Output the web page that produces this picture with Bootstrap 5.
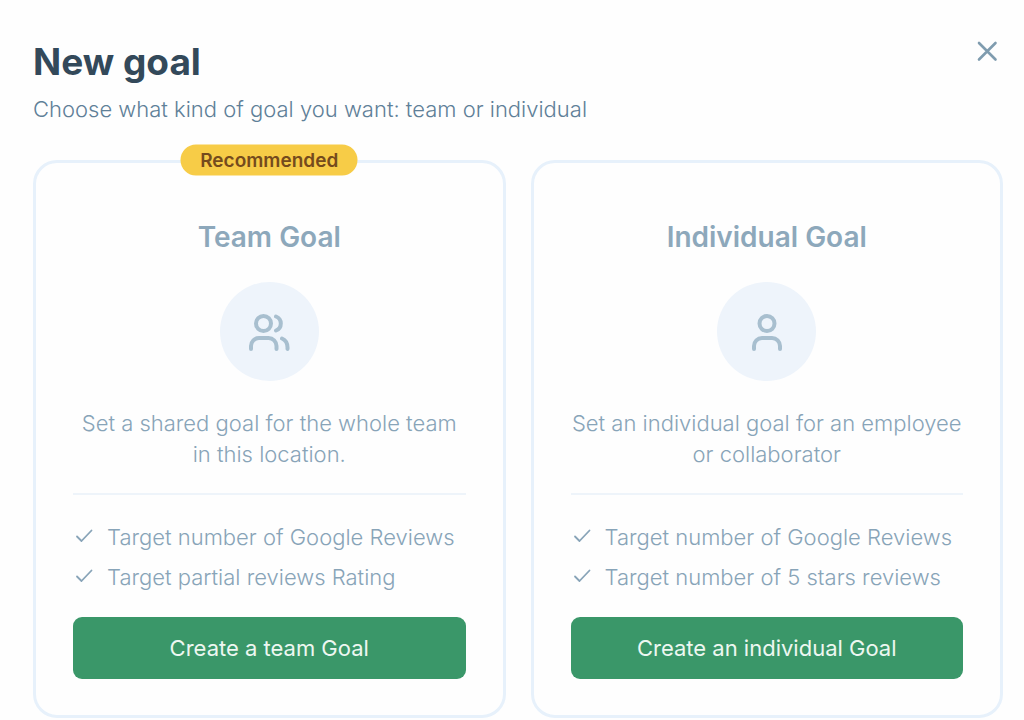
<!DOCTYPE html>
<html lang="en">
<head>
<meta charset="utf-8">
<meta name="viewport" content="width=device-width, initial-scale=1">
<title>New goal</title>
<link href="https://cdn.jsdelivr.net/npm/bootstrap@5.3.0/dist/css/bootstrap.min.css" rel="stylesheet">
<style>
  body { font-family: Inter, "Open Sans", sans-serif; font-size: 22px; font-weight: 300; background: #fefefe; color: #88a4b8; }
  .goal-dialog { padding: 38px 21px 0 33px; }
  .dialog-title { font-size: 37px; line-height: 48px; font-weight: 700; color: #33495a; }
  .dialog-hint { line-height: 32px; margin: 7px 0 35px; color: #5f8098; }
  .close-btn { color: #7f9caf; margin-right: 4px; line-height: 0; }
  .goal-options { --bs-gutter-x: 25px; --bs-gutter-y: 25px; }
  .goal-card { border: 3px solid #e7f1fb; border-radius: 24px; padding: 56px 37px 36px; background: #fefefe; color: inherit; }
  .goal-tag { top: -3px; font-size: 19px; line-height: 31px; font-weight: 600; color: #754b1d; background: #f7cc47; width: 177px; }
  .goal-name { font-size: 28px; line-height: 36px; font-weight: 600; margin-bottom: 27px; color: #8da8bb; }
  .goal-icon { width: 99px; height: 99px; background: #eef4fb; color: #a8bfcf; }
  .goal-text { line-height: 31px; margin: 27px 0 23px; }
  .goal-points { line-height: 40px; border-top: 2px solid #eef4fa; padding-top: 22px; margin-bottom: 20px; }
  .goal-points li { gap: 12px; }
  .btn-goal { --bs-btn-color: #edf7f1; --bs-btn-bg: #3a9769; --bs-btn-hover-color: #fff; --bs-btn-hover-bg: #31835a; --bs-btn-active-color: #fff; --bs-btn-active-bg: #2b744f; --bs-btn-font-size: 22px; --bs-btn-font-weight: 400; --bs-btn-line-height: 32px; --bs-btn-padding-y: 15px; --bs-btn-border-width: 0; --bs-btn-border-radius: 9px; }
</style>
</head>
<body>
<svg class="d-none" aria-hidden="true">
  <symbol id="check" viewBox="0 0 22 22"><path d="M4 10.500l4.500 4.500L18.500 4.500" fill="none" stroke="currentColor" stroke-width="1.800" stroke-linecap="round" stroke-linejoin="round"/></symbol>
</svg>
<main class="goal-dialog container-fluid">
  <header class="d-flex justify-content-between align-items-start">
    <div>
      <h1 class="dialog-title mb-0">New goal</h1>
      <p class="dialog-hint">Choose what kind of goal you want: team or individual</p>
    </div>
    <button type="button" class="close-btn btn p-0 border-0" aria-label="Close">
      <svg width="24" height="26" viewBox="0 0 24 26" fill="none" stroke="currentColor" stroke-width="2.6" stroke-linecap="round"><path d="M4 5l16.500 16.500M20.500 5L4 21.500"/></svg>
    </button>
  </header>
  <div class="goal-options row row-cols-1 row-cols-md-2 gy-0">
    <div class="col">
      <section class="goal-card card h-100 text-center">
        <span class="goal-tag position-absolute start-50 translate-middle rounded-pill">Recommended</span>
        <h2 class="goal-name">Team Goal</h2>
        <div class="goal-icon rounded-circle d-flex align-items-center justify-content-center mx-auto">
          <svg width="44" height="40" viewBox="0 0 44 40" fill="none" stroke="currentColor" stroke-width="4" stroke-linecap="round" aria-hidden="true"><circle cx="16.500" cy="11.500" r="7.500"/><path d="M29 4.500a7.500 7.500 0 0 1 0 14M4 37v-3a8 8 0 0 1 8-8h9.500a8 8 0 0 1 8 8v3M35 26.500q6 2.500 5.500 10.500"/></svg>
        </div>
        <p class="goal-text">Set a shared goal for the whole team in this location.</p>
        <ul class="goal-points list-unstyled text-start">
          <li class="d-flex align-items-center"><svg width="22" height="22" aria-hidden="true"><use href="#check"/></svg>Target number of Google Reviews</li>
          <li class="d-flex align-items-center"><svg width="22" height="22" aria-hidden="true"><use href="#check"/></svg>Target partial reviews Rating</li>
        </ul>
        <button type="button" class="btn btn-goal w-100 mt-auto">Create a team Goal</button>
      </section>
    </div>
    <div class="col">
      <section class="goal-card card h-100 text-center">
        <h2 class="goal-name">Individual Goal</h2>
        <div class="goal-icon rounded-circle d-flex align-items-center justify-content-center mx-auto">
          <svg width="44" height="40" viewBox="0 0 44 40" fill="none" stroke="currentColor" stroke-width="4" stroke-linecap="round" aria-hidden="true"><circle cx="22" cy="11.500" r="7.500"/><path d="M9 37v-3a8 8 0 0 1 8-8h10a8 8 0 0 1 8 8v3"/></svg>
        </div>
        <p class="goal-text">Set an individual goal for an employee or collaborator</p>
        <ul class="goal-points list-unstyled text-start">
          <li class="d-flex align-items-center"><svg width="22" height="22" aria-hidden="true"><use href="#check"/></svg>Target number of Google Reviews</li>
          <li class="d-flex align-items-center"><svg width="22" height="22" aria-hidden="true"><use href="#check"/></svg>Target number of 5 stars reviews</li>
        </ul>
        <button type="button" class="btn btn-goal w-100 mt-auto">Create an individual Goal</button>
      </section>
    </div>
  </div>
</main>
<script src="https://cdn.jsdelivr.net/npm/bootstrap@5.3.0/dist/js/bootstrap.bundle.min.js"></script>
</body>
</html>
